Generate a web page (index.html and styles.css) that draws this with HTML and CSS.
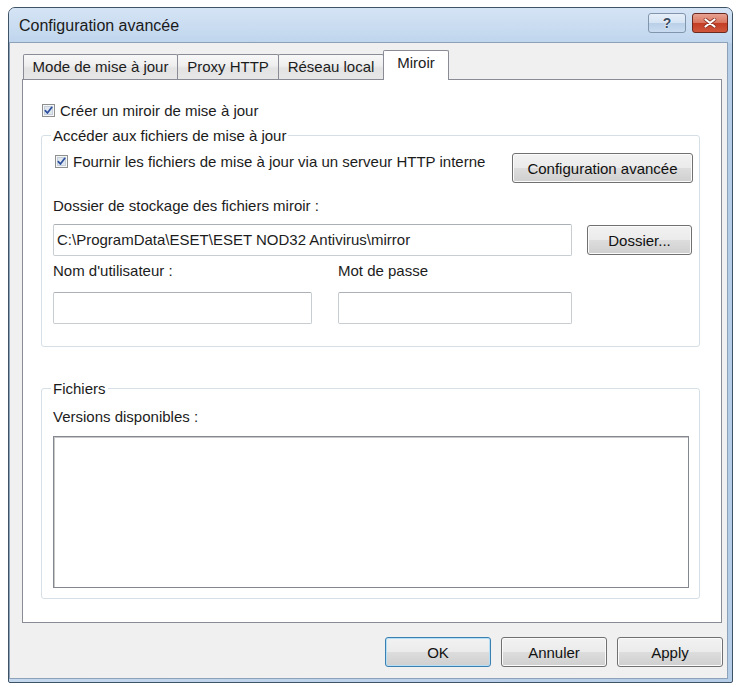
FILE: index.html
```html
<!DOCTYPE html>
<html lang="fr">
<head>
<meta charset="utf-8">
<title>Configuration avancée</title>
<link rel="stylesheet" href="styles.css">
</head>
<body>
<div class="window">
  <div class="titlebar">
    <span class="title">Configuration avancée</span>
    <div class="caption">
      <div class="cap help"><span class="q">?</span></div>
      <div class="cap close">
        <svg width="14" height="10" viewBox="0 0 14 10"><path d="M2.5 1.5 L11.5 8.5 M11.5 1.5 L2.5 8.5" stroke="#8a3324" stroke-width="3.6" stroke-linecap="round"/><path d="M2.5 1.5 L11.5 8.5 M11.5 1.5 L2.5 8.5" stroke="#ffffff" stroke-width="2.2" stroke-linecap="round"/></svg>
      </div>
    </div>
  </div>
  <div class="client">
    <div class="tabs">
      <div class="tab t1">Mode de mise à jour</div>
      <div class="tab t2">Proxy HTTP</div>
      <div class="tab t3">Réseau local</div>
      <div class="tab active">Miroir</div>
    </div>
    <div class="panel">
      <div class="check top-check">
        <svg class="cb" width="13" height="13" viewBox="0 0 13 13"><rect x="0.5" y="0.5" width="12" height="12" fill="#f6f6f6" stroke="#8e8f8f"/><rect x="2.5" y="2.5" width="8" height="8" fill="#dfe6ee" stroke="#c5cfda"/><path d="M3.3 6.6 L5.4 9 L9.8 3.3" fill="none" stroke="#2c4f9e" stroke-width="1.7" stroke-linecap="round" stroke-linejoin="round"/></svg>
        <span>Créer un miroir de mise à jour</span>
      </div>
      <fieldset class="group g1">
        <legend>Accéder aux fichiers de mise à jour</legend>
        <div class="serve-row">
          <div class="check">
            <svg class="cb" width="13" height="13" viewBox="0 0 13 13"><rect x="0.5" y="0.5" width="12" height="12" fill="#f6f6f6" stroke="#8e8f8f"/><rect x="2.5" y="2.5" width="8" height="8" fill="#dfe6ee" stroke="#c5cfda"/><path d="M3.3 6.6 L5.4 9 L9.8 3.3" fill="none" stroke="#2c4f9e" stroke-width="1.7" stroke-linecap="round" stroke-linejoin="round"/></svg>
            <span>Fournir les fichiers de mise à jour via un serveur HTTP interne</span>
          </div>
          <div class="btn btn-config">Configuration avancée</div>
        </div>
        <div class="label lbl-folder">Dossier de stockage des fichiers miroir :</div>
        <div class="path-row">
          <div class="input path">C:\ProgramData\ESET\ESET NOD32 Antivirus\mirror</div>
          <div class="btn btn-folder">Dossier...</div>
        </div>
        <div class="cred">
          <div class="field user">
            <div class="label">Nom d'utilisateur :</div>
            <div class="input"></div>
          </div>
          <div class="field pass">
            <div class="label">Mot de passe</div>
            <div class="input"></div>
          </div>
        </div>
      </fieldset>
      <fieldset class="group g2">
        <legend>Fichiers</legend>
        <div class="label">Versions disponibles :</div>
        <div class="listbox"></div>
      </fieldset>
    </div>
    <div class="actions">
      <div class="btn btn-ok">OK</div>
      <div class="btn">Annuler</div>
      <div class="btn">Apply</div>
    </div>
  </div>
</div>
</body>
</html>
```
FILE: styles.css
```css
body {
  margin: 0;
  background: #ffffff;
  font-family: "Liberation Sans", Arial, sans-serif;
  font-size: 15px;
  color: #1c1c1c;
}

.window {
  margin: 7px 0 0 8px;
  width: 725px;
  height: 676px;
  box-sizing: border-box;
  border: 1px solid #3f5366;
  border-radius: 7px 7px 2px 2px;
  background: linear-gradient(to right, #c4d8ee, #b5cde7);
  display: flex;
  flex-direction: column;
}

.titlebar {
  height: 35px;
  flex: none;
  display: flex;
  align-items: flex-start;
  background: linear-gradient(#d5e4f5, #bfd5ed);
  border-radius: 6px 6px 0 0;
}

.title {
  font-size: 16px;
  line-height: 35px;
  padding-left: 10px;
  color: #1a1a1a;
}

.caption {
  margin-left: auto;
  margin-top: 5px;
  margin-right: 4px;
  display: flex;
  gap: 6px;
}

.cap {
  height: 20px;
  box-sizing: border-box;
  border: 1px solid;
  border-radius: 3px;
  display: flex;
  align-items: center;
  justify-content: center;
}

.help {
  width: 38px;
  border-color: #8196ad;
  background: linear-gradient(#e6eff9 0%, #d5e3f3 50%, #b9cfe7 50%, #c9dcf0 100%);
}

.q {
  font-weight: bold;
  font-size: 14px;
  line-height: 14px;
  color: #3a4c63;
  text-shadow: 0 0 2px #ffffff, 0 0 1px #ffffff;
}

.close {
  width: 36px;
  border-color: #6a2a22;
  background: linear-gradient(#e8a393 0%, #d9735d 50%, #c23c24 50%, #d0563b 100%);
}

.client {
  flex: 1;
  margin: 0 5px 4px 1px;
  background: #f0f0f0;
  box-shadow: 0 0 0 1px #8da2b8;
}

.tabs {
  display: flex;
  align-items: flex-end;
  height: 36px;
  padding-left: 13px;
}

.tab {
  box-sizing: border-box;
  height: 25px;
  border: 1px solid #898c95;
  border-bottom: none;
  margin-right: -1px;
  border-radius: 2px 2px 0 0;
  background: linear-gradient(#f8f8f8, #eeeeee 45%, #e3e3e3 55%, #e7e7e7);
  text-align: center;
  line-height: 23px;
  white-space: nowrap;
}

.t1 { width: 155px; }
.t2 { width: 102px; }
.t3 { width: 106px; }

.tab.active {
  width: 66px;
  height: 30px;
  margin-bottom: -1px;
  background: #ffffff;
  line-height: 24px;
  position: relative;
  z-index: 1;
}

.panel {
  margin-left: 12px;
  width: 700px;
  height: 544px;
  box-sizing: border-box;
  border: 1px solid #898c95;
  background: #ffffff;
  padding: 22px 0 0 18px;
}

.check {
  display: flex;
  align-items: center;
  gap: 5px;
  line-height: 17px;
}

.cb { flex: none; }

.top-check { margin-left: 1px; }

.group {
  box-sizing: border-box;
  width: 659px;
  min-width: 0;
  margin: 8px 0 0 0;
  border: 1px solid #d5dfe5;
  border-radius: 3px;
  padding: 9px 6px 22px 11px;
}

legend {
  padding: 0 2px;
  margin-left: -2px;
  line-height: 17px;
  color: #1a1a1a;
}

.label { line-height: 17px; }

.serve-row {
  display: flex;
  align-items: flex-start;
  height: 30px;
}

.serve-row .check { margin-left: 2px; }

.btn {
  box-sizing: border-box;
  height: 30px;
  border: 1px solid #707070;
  border-radius: 3px;
  background: linear-gradient(#f2f2f2, #ebebeb 50%, #dddddd 50%, #cfcfcf);
  box-shadow: inset 0 0 0 1px #fbfbfb;
  display: flex;
  align-items: center;
  justify-content: center;
  color: #111111;
  white-space: nowrap;
}

.btn-config {
  width: 181px;
  margin-left: auto;
}

.lbl-folder { margin-top: 14px; }

.path-row {
  display: flex;
  align-items: center;
  margin-top: 10px;
}

.input {
  box-sizing: border-box;
  height: 32px;
  border: 1px solid #c8cdd2;
  border-top-color: #abb0b6;
  border-radius: 2px;
  background: #ffffff;
}

.path {
  width: 519px;
  padding-left: 3px;
  line-height: 30px;
  white-space: nowrap;
}

.btn-folder {
  width: 105px;
  margin-left: 15px;
}

.cred {
  display: flex;
  gap: 26px;
  margin-top: 6px;
}

.field .label { margin-bottom: 13px; }

.user .input { width: 259px; }
.pass .input { width: 234px; }

.g2 {
  margin-top: 33px;
  padding: 11px 6px 10px 11px;
}

.listbox {
  margin-top: 11px;
  width: 636px;
  height: 152px;
  box-sizing: border-box;
  border: 1px solid #828790;
  box-shadow: inset 1px 1px 0 #c8c8c8;
  background: #ffffff;
}

.actions {
  display: flex;
  justify-content: flex-end;
  gap: 10px;
  margin-top: 14px;
  padding-right: 4px;
}

.actions .btn { width: 106px; }

.btn-ok {
  border-color: #3c7fb1;
  box-shadow: inset 0 0 0 1px #b4e0f7;
}
```
